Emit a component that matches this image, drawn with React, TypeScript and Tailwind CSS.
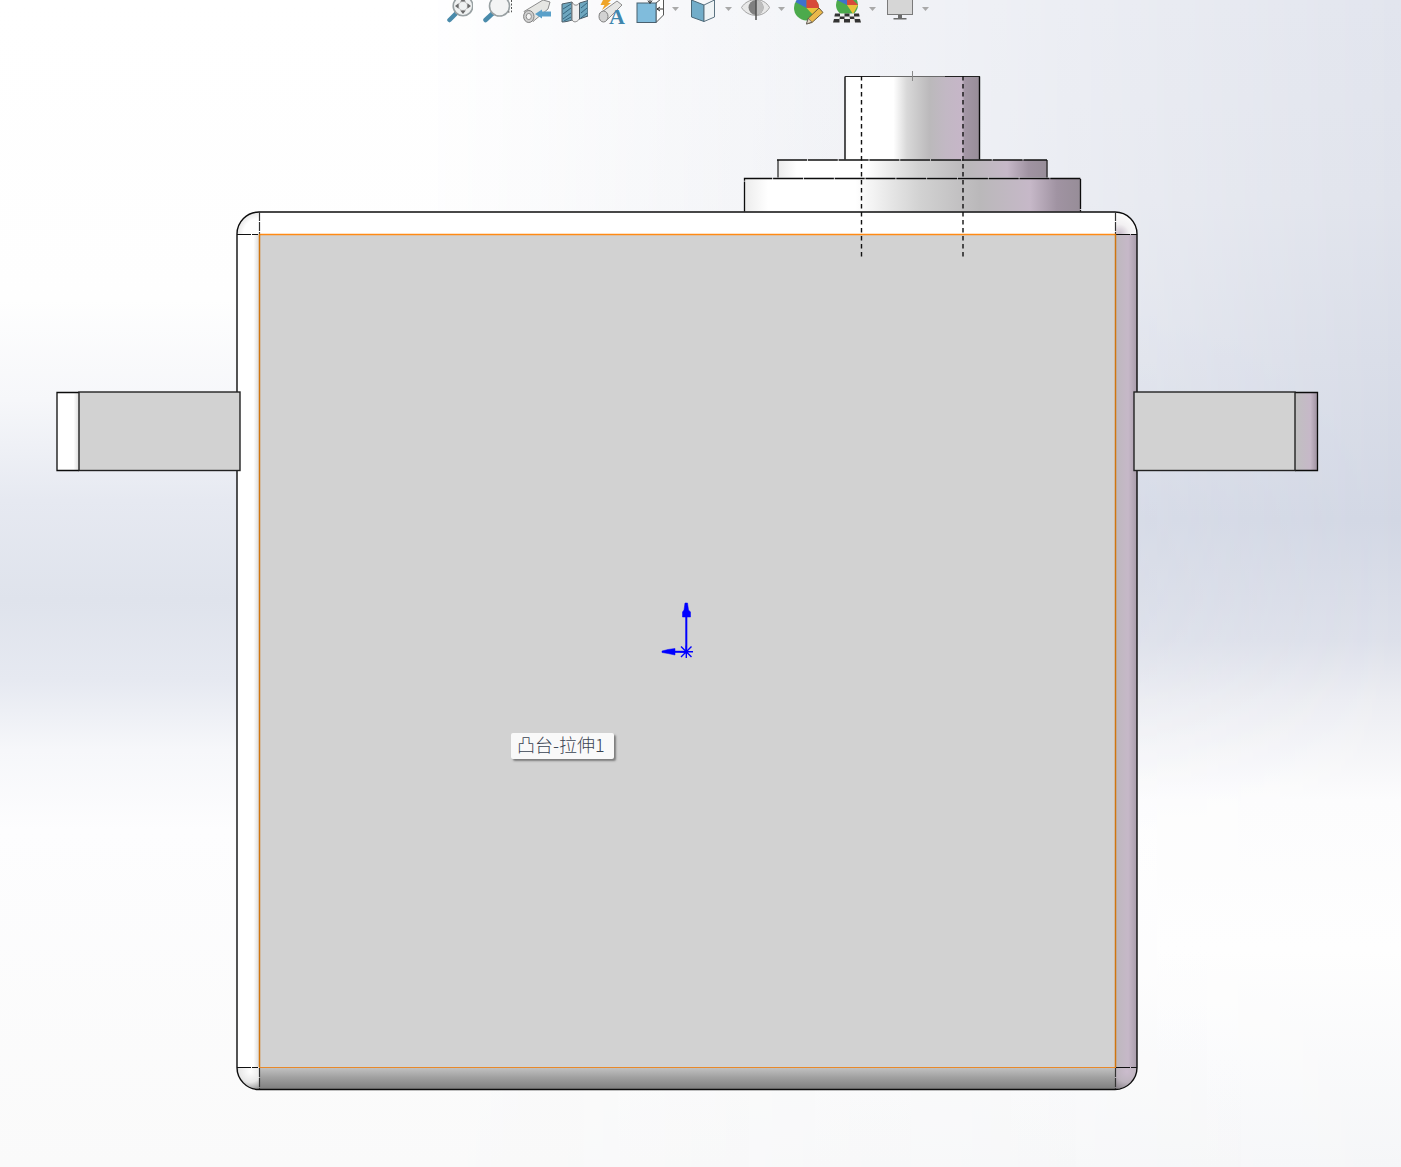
const Caret = ({ gap }: { gap: string }) => (
  <svg width="7" height="4" viewBox="0 0 7 4" className={`${gap} mt-[7px] shrink-0`}>
    <path d="M0 0h7L3.5 4z" fill="#a9a9a9" />
  </svg>
);

function ZoomFit() {
  return (
    <svg width="26" height="28" viewBox="0 0 26 28">
      <path d="M2.5 20 L9 13.5" stroke="#4a8bab" strokeWidth="4.5" strokeLinecap="round" />
      <circle cx="16" cy="6" r="9.8" fill="#f0f2f2" stroke="#99a1a3" strokeWidth="1.6" />
      <circle cx="16" cy="6" r="4.5" fill="none" stroke="#c4c4c4" />
      <path d="M16 -2l2.8 3.6h-5.6zM16 14l2.8-3.6h-5.6zM8 6l3.6-2.8v5.6zM24 6l-3.6-2.8v5.6z" fill="#6c6c6c" />
    </svg>
  );
}

function ZoomArea() {
  return (
    <svg width="29" height="28" viewBox="0 0 29 28">
      <path d="M2.5 20 L9.5 13.5" stroke="#4a8bab" strokeWidth="4.5" strokeLinecap="round" />
      <circle cx="16.5" cy="6" r="10" fill="#f3f4f4" stroke="#99a1a3" strokeWidth="1.6" />
      <path d="M28.5 0V12H25" fill="none" stroke="#555" strokeDasharray="2 1.5" />
    </svg>
  );
}

function PrevView() {
  return (
    <svg width="28" height="28" viewBox="0 0 28 28">
      <path d="M1 11.5 L20 0 L27 2 L25 9 L10 21.5z" fill="#e6e6e3" stroke="#8c8c8c" />
      <ellipse cx="5.8" cy="16.5" rx="5.2" ry="6" fill="#cfcfcf" stroke="#7f7f7f" />
      <ellipse cx="5.8" cy="16.5" rx="2.6" ry="3.1" fill="#f4f4f4" stroke="#8f8f8f" />
      <path d="M12 14 L19 9.5 V11.5 H28 V16.5 H19 V18.5z" fill="#5aa0c9" />
    </svg>
  );
}

function SectionView() {
  return (
    <svg width="27" height="28" viewBox="0 0 27 28">
      <path d="M1 4 L11 2 V20 C8 21 4 22 1 22z" fill="#6ea7bf" stroke="#4c5c66" />
      <path d="M11 2 C13 6 16 6 18.5 3 V19 C16 22 13 23 11 20z" fill="#efefef" stroke="#7c7c7c" />
      <path d="M18.5 3 L27 0.5 V16 L18.5 19z" fill="#6ea7bf" stroke="#4c5c66" />
      <path d="M2 9 L10 4 M2 14 L10 8 M2 19 L10 13 M3 21 L10 17 M20 8 L26 3 M20 13 L26 8 M20 18 L26 13" stroke="#2f5f78" strokeWidth="0.9" />
    </svg>
  );
}

function DynamicAnnotation() {
  return (
    <svg width="29" height="28" viewBox="0 0 29 28">
      <path d="M1 14 L19 1 L24 5 L8 21z" fill="#e6e6e4" stroke="#8c8c8c" />
      <ellipse cx="5.5" cy="16.5" rx="4.5" ry="5.5" fill="#d2d2d2" stroke="#7f7f7f" />
      <path d="M5 0h8l-3 3h3L4 10l2.5-5H2.5z" fill="#efa52a" />
      <text x="11" y="23.5" fontFamily="Liberation Serif" fontSize="22" fontWeight="700" fill="#3f86ad">
        A
      </text>
    </svg>
  );
}

function ViewOrientation() {
  return (
    <svg width="28" height="28" viewBox="0 0 28 28">
      <path d="M20 3 L27.5 -3 V15 L20 22.5z" fill="#fff" stroke="#555" />
      <rect x="1" y="3" width="19" height="19.5" fill="#80bcdc" stroke="#49606f" />
      <path d="M27 9 H21 M24 7 L21 9 L24 11" stroke="#333" fill="none" />
      <path d="M14 -1 V3 M12 0.5 L14 3.5 L16 0.5" stroke="#333" fill="none" />
    </svg>
  );
}

function DisplayStyle() {
  return (
    <svg width="24" height="28" viewBox="0 0 24 28">
      <path d="M0.5 0 L13 5 V21.5 L0.5 17z" fill="#72adc9" stroke="#4a6776" />
      <path d="M13 5 L23.5 0 V17 L13 21.5z" fill="#f0f4f6" stroke="#5b7280" />
    </svg>
  );
}

function Eye() {
  return (
    <svg width="29" height="28" viewBox="0 0 29 28">
      <path d="M0.5 7.5 C7 -3 23 -3 28.5 7.5 C23 18 7 18 0.5 7.5z" fill="#e8e8e8" stroke="#a3a3a3" />
      <circle cx="15" cy="7.5" r="7.5" fill="#808080" />
      <path d="M15 0 A7.5 7.5 0 0 1 15 15z" fill="#bdbdbd" />
      <path d="M15 0 V20" stroke="#4f4f4f" strokeWidth="1.5" />
    </svg>
  );
}

function EditAppearance() {
  return (
    <svg width="30" height="28" viewBox="0 0 30 28">
      <circle cx="12.5" cy="8" r="12.5" fill="#4caa4c" />
      <path d="M12.5 8 L1.5 2 A12.5 12.5 0 0 1 12.5 -4.5z" fill="#3f72cc" />
      <path d="M12.5 8 L12.5 -4.5 A12.5 12.5 0 0 1 25 8z" fill="#d84a3a" />
      <path d="M12.5 8 L25 8 A12.5 12.5 0 0 1 21 17z" fill="#e9c23a" />
      <path d="M12.5 24 L14.5 18 L25 8 L29 12.5 L18 22.5z" fill="#eab84a" stroke="#6b5a3a" />
      <path d="M12.5 24 L14.2 18.5 L17.8 22z" fill="#e8dcc8" stroke="#555" strokeWidth="0.7" />
    </svg>
  );
}

function Scene() {
  return (
    <svg width="28" height="28" viewBox="0 0 28 28">
      <circle cx="14" cy="5" r="11" fill="#4caa4c" />
      <path d="M14 5 L4 0 L14 -6z" fill="#3f72cc" />
      <path d="M14 5 L14 -6 L25 5z" fill="#d84a3a" />
      <path d="M14 5 L25 5 L20 14z" fill="#e9c23a" />
      <path d="M2 13.5H26L28 22.5H0z" fill="#efefef" />
      <path d="M2 13.5h5v3H1.4zM11.5 13.5h5v3h-5zM21 13.5h5l.6 3h-5.6zM7 16.5h4.5v2.5H6.5zM16.5 16.5H21l.5 2.5H17zM1 19h5.5v3.5H0zM11 19h6v3.5h-6zM21.5 19H27l1 3.5h-6z" fill="#333" />
    </svg>
  );
}

function Monitor() {
  return (
    <svg width="26" height="28" viewBox="0 0 26 28">
      <rect x="0.5" y="-3" width="25" height="17.5" fill="#d6d6d6" stroke="#7a7a7a" />
      <path d="M11 15h4v3h-4zM6.5 18h13v1.4h-13z" fill="#6a6a6a" />
    </svg>
  );
}

function Model() {
  const ink = "#0c0c0c";
  return (
    <svg width="1401" height="1167" viewBox="0 0 1401 1167" className="absolute left-0 top-0">
      <defs>
        <linearGradient id="boss" x1="0" x2="1" y1="0" y2="0">
          <stop offset="0" stopColor="#fafafa" />
          <stop offset="0.03" stopColor="#fff" />
          <stop offset="0.36" stopColor="#fff" />
          <stop offset="0.46" stopColor="#d8d8d8" />
          <stop offset="0.63" stopColor="#bbb9bb" />
          <stop offset="0.75" stopColor="#c2b8c4" />
          <stop offset="0.87" stopColor="#c6b6c8" />
          <stop offset="0.89" stopColor="#a396a5" />
          <stop offset="1" stopColor="#978d98" />
        </linearGradient>
        <linearGradient id="disc" x1="0" x2="1" y1="0" y2="0">
          <stop offset="0" stopColor="#ececec" />
          <stop offset="0.07" stopColor="#fff" />
          <stop offset="0.33" stopColor="#fff" />
          <stop offset="0.52" stopColor="#d2d2d2" />
          <stop offset="0.7" stopColor="#bab8ba" />
          <stop offset="0.85" stopColor="#c6b8c8" />
          <stop offset="0.93" stopColor="#a093a2" />
          <stop offset="1" stopColor="#978d98" />
        </linearGradient>
        <linearGradient id="bottomBand" x1="0" x2="0" y1="0" y2="1">
          <stop offset="0" stopColor="#c4c4c4" />
          <stop offset="0.45" stopColor="#a2a2a2" />
          <stop offset="1" stopColor="#7f7f7f" />
        </linearGradient>
        <linearGradient id="rightBand" x1="0" x2="1" y1="0" y2="0">
          <stop offset="0" stopColor="#bdb8bd" />
          <stop offset="0.6" stopColor="#c6b8c8" />
          <stop offset="1" stopColor="#a99dab" />
        </linearGradient>
        <linearGradient id="leftBand" x1="0" x2="1" y1="0" y2="0">
          <stop offset="0" stopColor="#fff" />
          <stop offset="0.75" stopColor="#fff" />
          <stop offset="1" stopColor="#dcdcdc" />
        </linearGradient>
        <linearGradient id="tabRight" x1="0" x2="1" y1="0" y2="0">
          <stop offset="0" stopColor="#c0c0c0" />
          <stop offset="0.7" stopColor="#c6b8c8" />
          <stop offset="1" stopColor="#a093a2" />
        </linearGradient>
        <radialGradient id="cornerTL" cx="1" cy="1" r="1">
          <stop offset="0" stopColor="#fff" />
          <stop offset="0.7" stopColor="#fff" />
          <stop offset="1" stopColor="#e6e6e6" />
        </radialGradient>
        <radialGradient id="cornerTR" cx="0.2" cy="1" r="1">
          <stop offset="0" stopColor="#c8bcca" />
          <stop offset="0.45" stopColor="#f2f0f2" />
          <stop offset="1" stopColor="#fff" />
        </radialGradient>
        <radialGradient id="cornerBL" cx="0.6" cy="0.2" r="0.9">
          <stop offset="0" stopColor="#fff" />
          <stop offset="0.55" stopColor="#e8e8e8" />
          <stop offset="1" stopColor="#8c8c8c" />
        </radialGradient>
        <radialGradient id="cornerBR" cx="0.55" cy="0.2" r="0.9">
          <stop offset="0" stopColor="#cbbccd" />
          <stop offset="0.55" stopColor="#bdb4be" />
          <stop offset="1" stopColor="#8a848b" />
        </radialGradient>
      </defs>

      {/* boss */}
      <rect x="845" y="76.5" width="134.5" height="83" fill="url(#boss)" />
      <path d="M845 159.5V76.5M979.5 76.5V159.5" stroke={ink} strokeWidth="1.4" fill="none" />
      <path d="M845 76.5H880M945 76.5H980" stroke="#222" strokeWidth="1.2" />
      <path d="M880 76.5H945" stroke="#6a6a6a" strokeWidth="1.2" />
      <path d="M912.5 71V81" stroke="#8a8a8a" />
      <rect x="778" y="160" width="269.5" height="17.5" fill="url(#disc)" />
      <path d="M778 177.5V160M1047 160V177.5" stroke="#222" strokeWidth="1.2" />
      <path d="M777 160H1047" stroke="#111" strokeWidth="1.4" strokeDasharray="30 0.8" />
      <rect x="744.5" y="178" width="336" height="33.5" fill="url(#disc)" />
      <path d="M744.5 211.5V178.5H1080.5V211.5" stroke={ink} strokeWidth="1.3" fill="none" strokeDasharray="30 0.8" />

      {/* body */}
      <path d="M259 212.5H1115V234H259z" fill="#fff" />
      <rect x="237" y="234" width="22" height="833" fill="url(#leftBand)" />
      <rect x="1115" y="234" width="22" height="833" fill="url(#rightBand)" />
      <rect x="259" y="1067" width="856" height="22" fill="url(#bottomBand)" />
      <rect x="259" y="234" width="856" height="833" fill="#d2d2d2" />
      <path d="M237 234A22 22 0 0 1 259 212V234z" fill="url(#cornerTL)" />
      <path d="M1115 212A22 22 0 0 1 1137 234H1115z" fill="url(#cornerTR)" />
      <path d="M237 1067H259V1089A22 22 0 0 1 237 1067z" fill="url(#cornerBL)" />
      <path d="M1115 1067H1137A22 22 0 0 1 1115 1089z" fill="url(#cornerBR)" />

      <path
        d="M259 212H1115A22 22 0 0 1 1137 234V1067A22 22 0 0 1 1115 1089.5H259A22 22 0 0 1 237 1067V234A22 22 0 0 1 259 212z"
        fill="none"
        stroke={ink}
        strokeWidth="1.4"
      />
      <path d="M237 234.5H258M1116 234.5H1137M237 1067.5H258M1116 1067.5H1137" stroke="#111" strokeWidth="1.2" strokeDasharray="14 1" />
      <path d="M259.5 212V234M1115.5 212V234M259.5 1068V1089M1115.5 1068V1089" stroke="#333" strokeWidth="1.2" strokeDasharray="9 1" />
      <path d="M259 234.5H1116" stroke="#ff8a14" strokeWidth="1.3" />
      <path d="M259 1067.5H1116" stroke="#e8892a" />
      <path d="M259.5 234V1067M1115.5 234V1067" stroke="#cf7510" strokeWidth="1.5" />

      {/* hidden hole edges */}
      <path d="M861.5 76V257M963 76V257" stroke="#111" strokeWidth="1.4" strokeDasharray="4.5 3.5" />

      {/* left lug */}
      <rect x="57" y="392" width="22" height="78" fill="url(#leftBand)" />
      <path d="M79 392.5H57V470.5H79" fill="none" stroke={ink} strokeWidth="1.3" />
      <rect x="79" y="392" width="161" height="78.5" fill="#d2d2d2" stroke="#222" strokeWidth="1.4" />

      {/* right lug */}
      <rect x="1295" y="392" width="22" height="78" fill="url(#tabRight)" />
      <path d="M1295 392.5H1317.5V470.5H1295" fill="none" stroke={ink} strokeWidth="1.3" />
      <rect x="1134" y="392" width="161" height="78.5" fill="#d2d2d2" stroke="#222" strokeWidth="1.4" />

      {/* origin triad */}
      <g fill="#0000ff" stroke="#0000ff">
        <path d="M686.3 651V616" strokeWidth="2" fill="none" />
        <path d="M685 603H687.5L688.5 610L690.5 612V617H682.5V612L684 610z" strokeWidth="0.5" />
        <path d="M686 651.8H674" strokeWidth="2" fill="none" />
        <path d="M662 651L668 649.5L675 648.5V655L668 653.5L662 652.5z" strokeWidth="0.5" />
        <path d="M681 646.5L691.5 657M691.5 646.5L681 657M686.3 645.5V658M680 651.8H693" strokeWidth="1.4" fill="none" />
      </g>
    </svg>
  );
}

export default function App() {
  return (
    <div className="relative h-[1167px] w-[1401px] overflow-hidden bg-[linear-gradient(180deg,#ffffff_0px,#fefefe_300px,#f6f7fa_400px,#e6e9f1_500px,#dfe3ec_600px,#e6e9f1_680px,#f6f7fa_750px,#fdfdfe_830px,#fafafa_1167px)]">
      {/* right side of the viewport background */}
      <div className="absolute inset-0 bg-[linear-gradient(180deg,#e2e5ee_0px,#e0e3ec_200px,#d2d7e4_520px,#dde0ea_640px,#ecedf2_700px,#fcfcfd_800px,#fefefe_950px,#f5f6f8_1167px)] [mask-image:linear-gradient(90deg,transparent_30%,black_100%)]" />

      <Model />

      {/* view toolbar */}
      <div className="absolute left-[447px] top-0 flex h-[28px] items-start">
        <ZoomFit />
        <div className="ml-[10px]"><ZoomArea /></div>
        <div className="ml-[11px]"><PrevView /></div>
        <div className="ml-[10px]"><SectionView /></div>
        <div className="ml-[10px]"><DynamicAnnotation /></div>
        <div className="ml-[9px]"><ViewOrientation /></div>
        <Caret gap="ml-[8px]" />
        <div className="ml-[12px]"><DisplayStyle /></div>
        <Caret gap="ml-[10px]" />
        <div className="ml-[9px]"><Eye /></div>
        <Caret gap="ml-[8px]" />
        <div className="ml-[9px]"><EditAppearance /></div>
        <div className="ml-[9px]"><Scene /></div>
        <Caret gap="ml-[8px]" />
        <div className="ml-[11px]"><Monitor /></div>
        <Caret gap="ml-[9px]" />
      </div>

      {/* hover tip */}
      <div className="absolute left-[511px] top-[733px] flex h-[26px] w-[103px] items-start rounded-[2px] bg-[#f9f9f9] pl-[6px] pt-[2px] font-['Noto_Sans_CJK_SC',sans-serif] text-[18px] font-light leading-[18px] text-[#3a4352] shadow-[2px_2px_2px_#7d7d7d]">
        凸台-拉伸1
      </div>
    </div>
  );
}
